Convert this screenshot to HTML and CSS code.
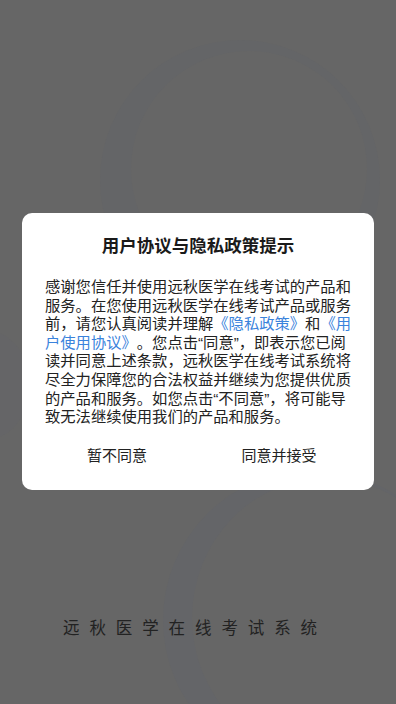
FILE: index.html
```html
<!DOCTYPE html>
<html lang="zh-CN">

<head>
    <meta charset="UTF-8">
    <meta name="viewport" content="width=device-width, initial-scale=1.0">
    <title>远秋医学在线考试系统</title>
    <link rel="stylesheet" href="styles.css">
</head>

<body>
    <div class="screen">
        <div class="deco ring-top"></div>
        <div class="deco ring-top-inner"></div>
        <div class="deco ring-bottom"></div>
        <div class="deco ring-bottom-inner"></div>
        <div class="deco blob-left"></div>

        <div class="dialog">
            <h2 class="dialog-title">用户协议与隐私政策提示</h2>
            <p class="dialog-text">感谢您信任并使用远秋医学在线考试的产品和服务。在您使用远秋医学在线考试产品或服务前，请您认真阅读并理解<a href="#">《隐私政策》</a>和<a href="#">《用户使用协议》</a>。您点击“同意”，即表示您已阅读并同意上述条款，远秋医学在线考试系统将尽全力保障您的合法权益并继续为您提供优质的产品和服务。如您点击“不同意”，将可能导致无法继续使用我们的产品和服务。</p>
            <div class="dialog-actions">
                <button class="action">暂不同意</button>
                <button class="action">同意并接受</button>
            </div>
        </div>

        <div class="brand">远秋医学在线考试系统</div>
    </div>
</body>

</html>
```

FILE: styles.css
```css
body {
    margin: 0;
    font-family: "Liberation Sans", "Noto Sans CJK SC", sans-serif;
    background: #666666;
}

.screen {
    position: relative;
    width: 396px;
    height: 704px;
    overflow: hidden;
    display: flex;
    flex-direction: column;
    align-items: center;
}

/* faint splash circles behind the dim layer */
.deco {
    position: absolute;
    border-radius: 50%;
}

.ring-top {
    left: 100px;
    top: 40px;
    width: 280px;
    height: 280px;
    background: #646567;
}

.ring-top-inner {
    left: 131px;
    top: 51px;
    width: 236px;
    height: 236px;
    background: #666666;
}

.ring-bottom {
    left: 163px;
    top: 470px;
    width: 300px;
    height: 300px;
    background: #646568;
}

.ring-bottom-inner {
    left: 192px;
    top: 478px;
    width: 270px;
    height: 280px;
    background: #666666;
}

.blob-left {
    left: -60px;
    top: 330px;
    width: 90px;
    height: 110px;
    background: #656567;
}

.dialog {
    position: relative;
    box-sizing: border-box;
    width: 352px;
    height: 277px;
    margin-top: 213px;
    padding: 21px 23px 0;
    background: #ffffff;
    border-radius: 10px;
}

.dialog-title {
    margin: 0;
    font-size: 17.5px;
    line-height: 24px;
    font-weight: bold;
    color: #1a1a1a;
    text-align: center;
}

.dialog-text {
    margin: 20px 0 0;
    font-size: 15.3px;
    line-height: 18.6px;
    color: #222222;
    text-spacing-trim: space-all;
}

.dialog-text a {
    color: #3a83dc;
    text-decoration: none;
}

.dialog-actions {
    display: grid;
    grid-template-columns: 1fr 1fr;
    margin: 9px -9px 0;
}

.action {
    padding: 10px 0;
    border: none;
    background: none;
    font-family: inherit;
    font-size: 15px;
    line-height: 20px;
    color: #222222;
    cursor: pointer;
}

.brand {
    position: relative;
    margin-top: 128px;
    padding-right: 6px;
    font-size: 16.5px;
    line-height: 20px;
    letter-spacing: 9.9px;
    color: #222222;
}
```
